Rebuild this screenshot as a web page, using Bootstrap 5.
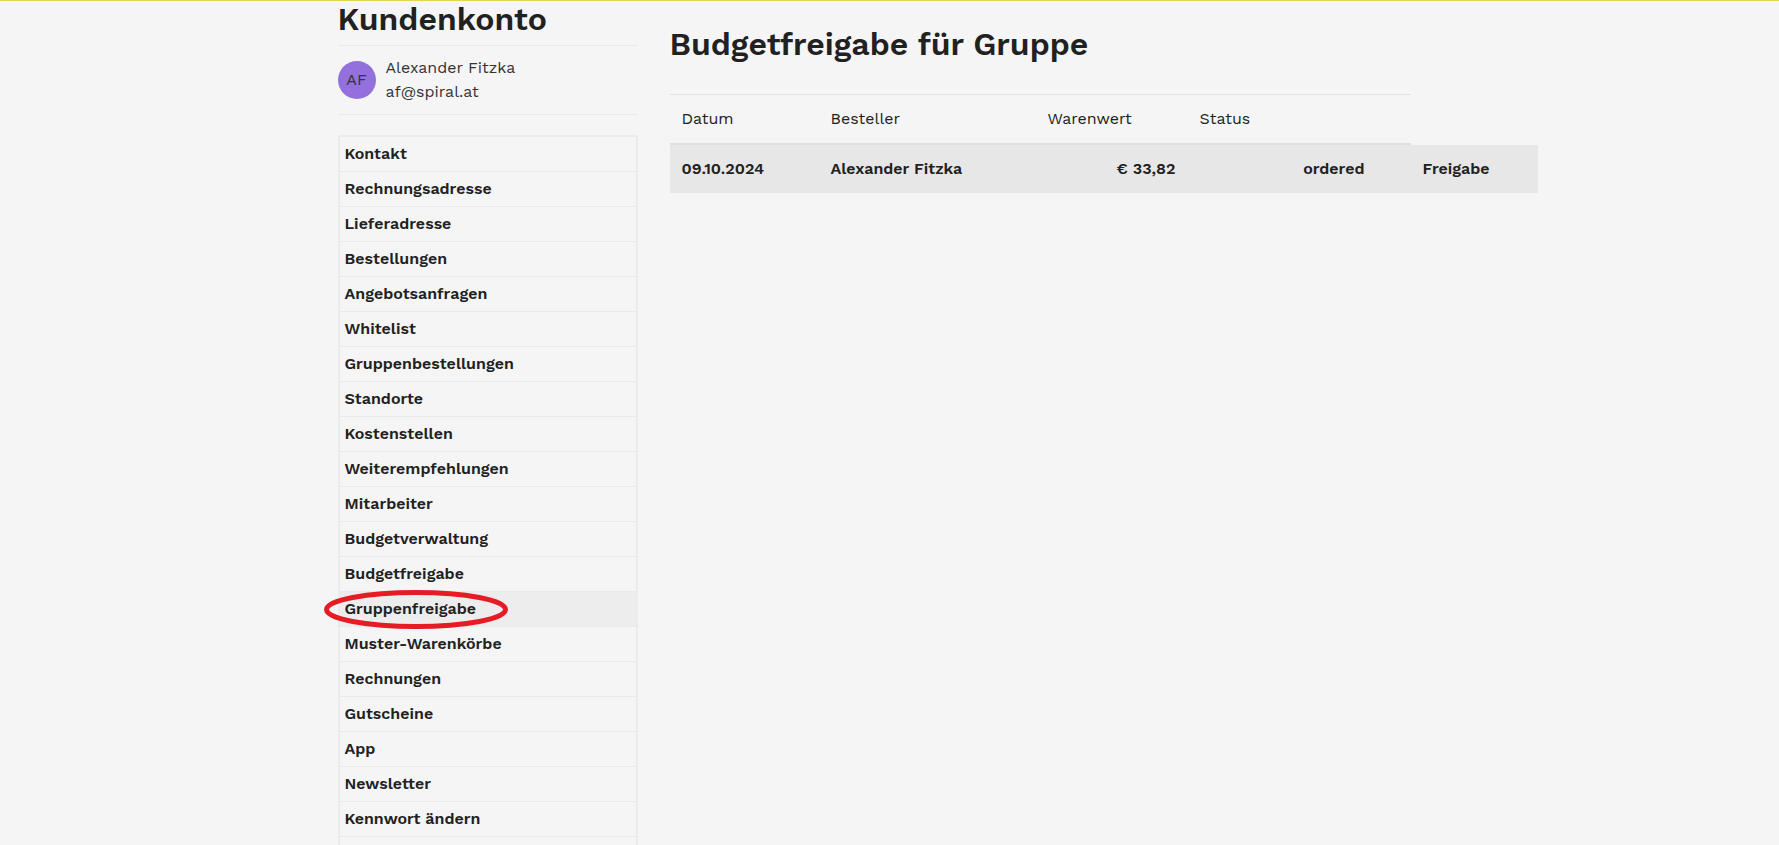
<!DOCTYPE html>
<html lang="de">
<head>
<meta charset="utf-8">
<meta name="viewport" content="width=device-width, initial-scale=1">
<title>Kundenkonto</title>
<link href="https://cdn.jsdelivr.net/npm/bootstrap@5.3.0/dist/css/bootstrap.min.css" rel="stylesheet">
<style>
  body { font-family: "Work Sans", Inter, sans-serif; font-size: 16px; line-height: 24px; color: #212121; background: #f5f5f5; border-top: 1px solid #e8d44d; overflow-x: hidden; }
  h1, h2 { font-size: 32px; line-height: 36px; font-weight: 600; }
  .account-page { max-width: 1136px; }
  .account-user { border-top: 1px solid #e9e9e9; border-bottom: 1px solid #e9e9e9; color: #333; padding: 10px 0; margin-bottom: 20px; }
  .user-initials { width: 38px; height: 38px; background: #9370db; margin-right: 10px; }
  .account-menu { border: 2px solid #ebebeb; border-bottom: 0; padding-bottom: 8px; }
  .account-menu a { display: block; height: 35px; padding: 5px; border-bottom: 1px solid #e9e9e9; font-weight: 600; color: inherit; text-decoration: none; position: relative; }
  .account-menu a:hover, .account-menu a.active { background: #ededed; }
  .marker { position: absolute; left: -16px; top: -2px; width: 184px; height: 39px; pointer-events: none; }
  .account-title { padding-top: 25px; margin-bottom: 32px; }
  .account-main { min-width: 0; }
  @media (min-width: 992px) { .account-side { flex: 0 0 332px; } }
  .orders { table-layout: fixed; width: 868px; border-collapse: separate; border-spacing: 0; }
  .orders th, .orders td { padding: 12px; text-align: left; }
  .orders th { font-weight: 400; border-top: 1px solid #dee2e6; border-bottom: 2px solid #dfdfe2; }
  .orders td { font-weight: 600; background: #e7e7e7; }
  .orders .amount { text-align: right; }
  .orders .state { text-align: right; padding-right: 46px; }
  .c-date { width: 149px; } .c-name { width: 217px; } .c-sum { width: 152px; } .c-state { width: 223px; }
  .release { font-weight: 600; line-height: 24px; color: inherit; }
</style>
</head>
<body>
<div class="container-fluid account-page px-0">
  <div class="row g-0">
    <aside class="col-12 account-side px-3">
      <h1 class="mb-2">Kundenkonto</h1>
      <div class="account-user d-flex align-items-center">
        <span class="user-initials rounded-circle d-flex align-items-center justify-content-center">AF</span>
        <div>Alexander Fitzka<br>af@spiral.at</div>
      </div>
      <nav class="account-menu" aria-label="Kundenkonto">
        <a href="#">Kontakt</a>
        <a href="#">Rechnungsadresse</a>
        <a href="#">Lieferadresse</a>
        <a href="#">Bestellungen</a>
        <a href="#">Angebotsanfragen</a>
        <a href="#">Whitelist</a>
        <a href="#">Gruppenbestellungen</a>
        <a href="#">Standorte</a>
        <a href="#">Kostenstellen</a>
        <a href="#">Weiterempfehlungen</a>
        <a href="#">Mitarbeiter</a>
        <a href="#">Budgetverwaltung</a>
        <a href="#">Budgetfreigabe</a>
        <a href="#" class="active" aria-current="page">Gruppenfreigabe<svg class="marker" viewBox="0 0 184 39" aria-hidden="true"><ellipse cx="92" cy="19.500" rx="89.500" ry="17" fill="none" stroke="#e51c23" stroke-width="5"/></svg></a>
        <a href="#">Muster-Warenkörbe</a>
        <a href="#">Rechnungen</a>
        <a href="#">Gutscheine</a>
        <a href="#">App</a>
        <a href="#">Newsletter</a>
        <a href="#">Kennwort ändern</a>
      </nav>
    </aside>
    <main class="col account-main px-3">
      <h2 class="account-title">Budgetfreigabe für Gruppe</h2>
      <table class="orders">
        <colgroup><col class="c-date"><col class="c-name"><col class="c-sum"><col class="c-state"><col></colgroup>
        <thead>
          <tr><th scope="col">Datum</th><th scope="col">Besteller</th><th scope="col">Warenwert</th><th scope="col">Status</th></tr>
        </thead>
        <tbody>
          <tr><td>09.10.2024</td><td>Alexander Fitzka</td><td class="amount">€ 33,82</td><td class="state">ordered</td><td><button type="button" class="release btn p-0 border-0 d-block">Freigabe</button></td></tr>
        </tbody>
      </table>
    </main>
  </div>
</div>
<script src="https://cdn.jsdelivr.net/npm/bootstrap@5.3.0/dist/js/bootstrap.bundle.min.js"></script>
</body>
</html>
